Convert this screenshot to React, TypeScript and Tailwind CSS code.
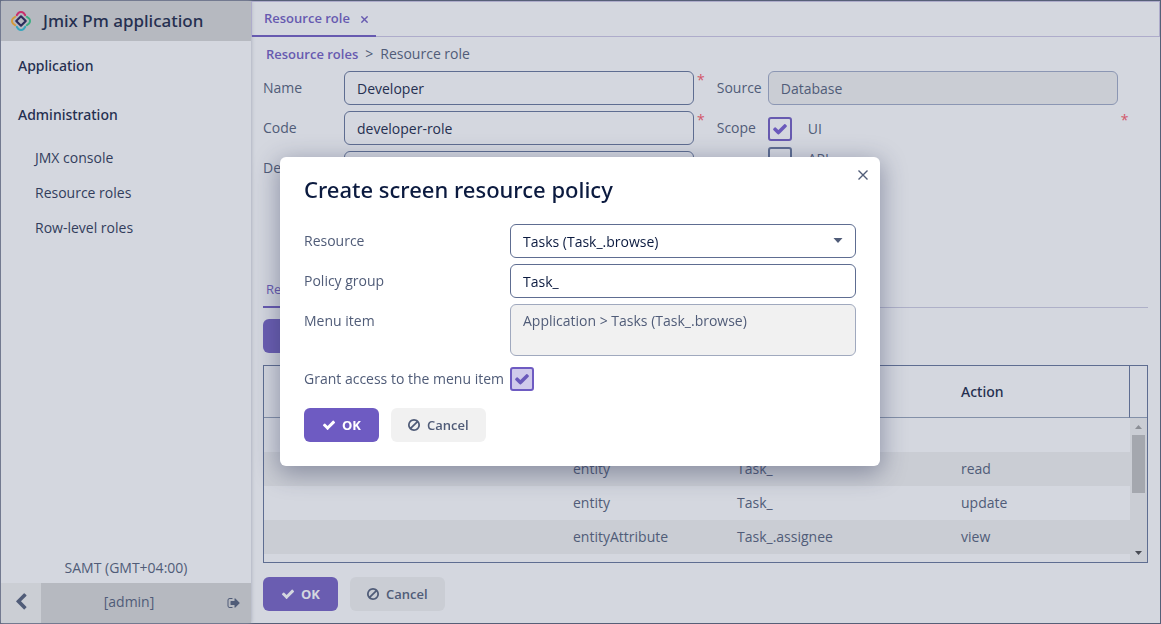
import { useState } from "react";

const menuItems = ["JMX console", "Resource roles", "Row-level roles"];

const policies = [
  { type: "", resource: "", action: "" },
  { type: "entity", resource: "Task_", action: "read" },
  { type: "entity", resource: "Task_", action: "update" },
  { type: "entityAttribute", resource: "Task_.assignee", action: "view" },
  { type: "", resource: "", action: "" },
];

export default function App() {
  return (
    <div className="flex min-h-screen border border-[#565f78] bg-[#d4d7df] font-['Open_Sans',sans-serif] text-sm text-[#505c78]">
      <Sidebar />
      <main className="flex min-w-0 flex-1 flex-col">
        <div className="flex h-9 border border-[#aeaccb]">
          <div className="flex h-[35px] shrink-0 items-center gap-1.5 border-b-2 border-[#675ab0] pr-1 pl-3 text-[13px] font-semibold text-[#675ab0]">
            <a href="#role">Resource role</a>
            <button aria-label="Close tab" className="flex size-4 items-center justify-center pt-0.5 pl-0.5">
              <CloseIcon className="size-[7px]" strokeWidth={2} />
            </button>
          </div>
        </div>
        <div className="flex flex-col px-3">
          <nav className="flex h-[34px] items-center gap-[7px] px-[3px]">
            <a href="#roles" className="text-[13px] font-semibold text-[#675ab0]">
              Resource roles
            </a>
            <span>&gt;</span>
            <span>Resource role</span>
          </nav>
          <RoleForm />
          <div className="flex h-8 border-b border-[#aeb0c8]">
            <a href="#policies" className="h-8 border-b-2 border-[#675ab0] px-[3px] pt-1 text-[13px] text-[#675ab0]">
              Resource policies
            </a>
          </div>
          <div className="flex pt-[11px] pb-3">
            <button
              aria-label="Create policy"
              className="flex h-[34px] items-center rounded-md bg-[#6a5db1] px-[18px] text-[#d4d7df]"
            >
              <CheckIcon className="size-3.5" />
            </button>
          </div>
          <PolicyTable />
          <div className="mt-3.5 flex gap-3">
            <OkButton dimmed />
            <CancelButton dimmed />
          </div>
        </div>
      </main>
      <PolicyDialog />
    </div>
  );
}

function Sidebar() {
  return (
    <aside className="flex w-[250px] shrink-0 flex-col shadow-[0_0_4px_#9ea3b3]">
      <header className="flex h-10 items-center gap-[11px] bg-[#b6b9c0] px-[9px] font-['Noto_Sans',sans-serif] text-[17px] font-medium text-[#252f50]">
        <Logo />
        Jmix Pm application
      </header>
      <nav className="flex flex-1 flex-col text-[#252f50]">
        <a
          href="#application"
          className="flex h-[49px] items-center px-[17px] font-['Noto_Sans',sans-serif] font-medium"
        >
          Application
        </a>
        <a
          href="#administration"
          className="flex h-[50px] items-center px-[17px] font-['Noto_Sans',sans-serif] font-medium"
        >
          Administration
        </a>
        {menuItems.map((item) => (
          <a key={item} href="#item" className="flex h-[35px] items-center px-[34px] text-[#323d5c]">
            {item}
          </a>
        ))}
      </nav>
      <p className="pb-[5px] text-center">SAMT (GMT+04:00)</p>
      <footer className="flex h-10">
        <button aria-label="Collapse menu" className="flex w-10 items-center justify-center bg-[#cbced4] pb-0.5">
          <ChevronLeftIcon />
        </button>
        <div className="flex flex-1 items-center bg-[#b6b9c0] pr-2.5">
          <span className="flex-1 pr-2.5 pb-0.5 text-center">[admin]</span>
          <button aria-label="Log out">
            <SignOutIcon />
          </button>
        </div>
      </footer>
    </aside>
  );
}

function RoleForm() {
  return (
    <form className="flex h-[205px] gap-3">
      <div className="flex flex-col gap-1.5">
        <div className="flex">
          <label htmlFor="name" className="w-[81px] pt-[7px]">Name</label>
          <input
            id="name"
            defaultValue="Developer"
            className="h-[34px] w-[350px] rounded-md border border-[#5e6d91] px-3 text-[#252f50]"
          />
          <Required />
        </div>
        <div className="flex">
          <label htmlFor="code" className="w-[81px] pt-[7px]">Code</label>
          <input
            id="code"
            defaultValue="developer-role"
            className="h-[34px] w-[350px] rounded-md border border-[#5e6d91] px-3 text-[#252f50]"
          />
          <Required />
        </div>
        <div className="flex">
          <label htmlFor="description" className="w-[81px] pt-[7px]">Description</label>
          <textarea id="description" className="h-28 w-[350px] resize-none rounded-md border border-[#5e6d91] px-3" />
        </div>
      </div>
      <div className="flex flex-col gap-1.5">
        <div className="flex">
          <label htmlFor="source" className="w-[51px] pt-[7px]">Source</label>
          <input
            id="source"
            readOnly
            value="Database"
            className="h-[34px] w-[350px] rounded-md border border-[#8b96b3] bg-[#cacdd4] px-3"
          />
        </div>
        <fieldset className="flex">
          <legend className="float-left w-[51px] pt-[7px]">Scope</legend>
          <div className="flex w-[350px] flex-col gap-1.5 pt-1.5">
            <label className="flex items-center gap-4">
              <Checkbox defaultChecked dimmed />
              UI
            </label>
            <label className="flex items-center gap-4">
              <Checkbox dimmed />
              API
            </label>
          </div>
          <Required />
        </fieldset>
      </div>
    </form>
  );
}

function PolicyTable() {
  return (
    <div className="flex h-[198px] overflow-hidden border border-[#5e6d91]">
      <table className="w-full flex-1 table-fixed border-separate border-spacing-0 self-start text-left">
        <thead className="font-['Noto_Sans',sans-serif]">
          <tr className="h-[52px] text-[#252f50]">
            <th className="w-[297px] border-b border-b-[#8390a8]" />
            <th className="w-[164px] border-b border-b-[#8390a8] px-3 font-medium">Type</th>
            <th className="w-[224px] border-b border-b-[#8390a8] px-3 font-medium">Resource</th>
            <th className="border-r border-b border-r-[#5e6d91] border-b-[#8390a8] px-3 font-medium">Action</th>
          </tr>
        </thead>
        <tbody>
          {policies.map((policy, i) => (
            <tr key={i} className="h-[34px] even:bg-[#cacdd4]">
              <td />
              <td className="px-3">{policy.type}</td>
              <td className="px-3">{policy.resource}</td>
              <td className="px-3">{policy.action}</td>
            </tr>
          ))}
        </tbody>
      </table>
      <div className="flex w-[17px] shrink-0 flex-col">
        <div className="h-[52px] border-b border-[#8390a8]" />
        <div className="flex flex-1 flex-col items-center bg-[#cacdd4] pt-[7px] pb-[7px]">
          <svg viewBox="0 0 7 4" className="h-1 w-[7px] fill-[#8b8e95]">
            <path d="M0 4 3.5 0 7 4z" />
          </svg>
          <div className="mt-1.5 h-[58px] w-[13px] bg-[#a4a7ae]" />
          <svg viewBox="0 0 7 4" className="mt-auto h-1 w-[7px] fill-[#484b54]">
            <path d="M0 0 3.5 4 7 0z" />
          </svg>
        </div>
      </div>
    </div>
  );
}

function PolicyDialog() {
  const [group, setGroup] = useState("Task_");

  return (
    <div className="fixed inset-0 flex items-center justify-center pr-px pb-px">
      <div
        role="dialog"
        aria-labelledby="dialog-title"
        className="relative w-[600px] rounded-md bg-white px-6 pb-6 shadow-[0_6px_24px_2px_rgba(40,48,85,0.4)]"
      >
        <button aria-label="Close" className="absolute top-3 right-[11px] p-px text-[#505c78]">
          <CloseIcon className="size-2.5" strokeWidth={1.4} />
        </button>
        <h2
          id="dialog-title"
          className="h-[67px] pt-4 font-['Noto_Sans',sans-serif] text-[22px] leading-8 font-medium text-[#0b1a3f]"
        >
          Create screen resource policy
        </h2>
        <form className="flex flex-col gap-1.5">
          <div className="flex">
            <label htmlFor="resource" className="w-[206px] pt-[7px]">Resource</label>
            <div className="relative flex-1">
              <select
                id="resource"
                className="h-[34px] w-full appearance-none rounded-md border border-[#5e6d91] bg-white px-3 pt-0.5 text-[#0b1a3f]"
              >
                <option>Tasks (Task_.browse)</option>
              </select>
              <svg viewBox="0 0 10 5" className="pointer-events-none absolute top-3.5 right-[13px] h-[5px] w-2.5 fill-[#505c78]">
                <path d="M.5 0h9L5 5z" />
              </svg>
            </div>
          </div>
          <div className="flex">
            <label htmlFor="group" className="w-[206px] pt-[7px]">Policy group</label>
            <input
              id="group"
              value={group}
              onChange={(e) => setGroup(e.target.value)}
              className="h-[34px] min-w-0 flex-1 rounded-md border border-[#5e6d91] px-3 text-[#0b1a3f]"
            />
          </div>
          <div className="flex">
            <label htmlFor="menu-item" className="w-[206px] pt-[7px]">Menu item</label>
            <textarea
              id="menu-item"
              readOnly
              value="Application > Tasks (Task_.browse)"
              className="h-[52px] min-w-0 flex-1 resize-none rounded-md border border-[#a0a9be] bg-[#f1f1f1] px-3 py-1.5"
            />
          </div>
          <div className="flex h-[34px] items-center">
            <label htmlFor="grant" className="w-[206px]">Grant access to the menu item</label>
            <Checkbox id="grant" defaultChecked />
          </div>
        </form>
        <div className="mt-3 flex gap-3">
          <OkButton />
          <CancelButton />
        </div>
      </div>
    </div>
  );
}

function Required() {
  return <span className="pl-[3px] leading-[18px] text-[#d2566a]">*</span>;
}

function Checkbox({ id, defaultChecked, dimmed }: { id?: string; defaultChecked?: boolean; dimmed?: boolean }) {
  return (
    <span className="grid size-6">
      <input
        id={id}
        type="checkbox"
        defaultChecked={defaultChecked}
        className={
          dimmed
            ? "peer col-start-1 row-start-1 size-6 appearance-none rounded-[3px] border-2 border-[#5e6d91] checked:border-[#675ab0]"
            : "peer col-start-1 row-start-1 size-6 appearance-none rounded-[3px] border-2 border-[#6e5bc2] bg-[#d0caeb]"
        }
      />
      <CheckIcon className="pointer-events-none invisible col-start-1 row-start-1 size-4 place-self-center text-[#6a59bb] peer-checked:visible" />
    </span>
  );
}

function OkButton({ dimmed }: { dimmed?: boolean }) {
  return (
    <button
      className={
        dimmed
          ? "flex h-[34px] items-center gap-1.5 rounded-md bg-[#6a5db1] px-[18px] text-[13px] font-bold text-[#d4d7df]"
          : "flex h-[34px] items-center gap-1.5 rounded-md bg-[#6e5bc2] px-[18px] text-[13px] font-bold text-white"
      }
    >
      <CheckIcon className="size-3.5" />
      OK
    </button>
  );
}

function CancelButton({ dimmed }: { dimmed?: boolean }) {
  return (
    <button
      className={
        dimmed
          ? "flex h-[34px] items-center gap-1.5 rounded-md bg-[#cacdd4] pr-[17px] pl-4 text-[13px] font-semibold"
          : "flex h-[34px] items-center gap-1.5 rounded-md bg-[#f1f1f1] pr-[17px] pl-4 text-[13px] font-semibold"
      }
    >
      <BanIcon />
      Cancel
    </button>
  );
}

function Logo() {
  return (
    <svg viewBox="0 0 22 22" className="size-[22px]" fill="none" strokeWidth="2" strokeLinecap="round">
      <path d="M6.8 5.2 8.4 3Q9.4 2 11 2T13.6 3L15.2 5.2" stroke="#c92e6c" />
      <path d="M16.8 6.8 19 8.4Q20 9.4 20 11T19 13.6L16.8 15.2" stroke="#3cae82" />
      <path d="M15.2 16.8 13.6 19Q12.6 20 11 20T8.4 19L6.8 16.8" stroke="#37a6bd" />
      <path d="M5.2 15.2 3 13.6Q2 12.6 2 11T3 8.4L5.2 6.8" stroke="#d59a3c" />
      <path d="M11 6.2 15.8 11 11 15.8 6.2 11z" stroke="#2b2b5c" strokeLinejoin="round" />
    </svg>
  );
}

function CloseIcon({ className, strokeWidth }: { className: string; strokeWidth: number }) {
  return (
    <svg viewBox="0 0 10 10" className={className} fill="none" stroke="currentColor" strokeWidth={strokeWidth}>
      <path d="M.5.5l9 9M9.5.5l-9 9" />
    </svg>
  );
}

function CheckIcon({ className }: { className: string }) {
  return (
    <svg viewBox="0 0 1792 1792" className={className} fill="currentColor">
      <path d="M1671 566q0 40-28 68l-724 724-136 136q-28 28-68 28t-68-28l-136-136-362-362q-28-28-28-68t28-68l136-136q28-28 68-28t68 28l294 295 656-657q28-28 68-28t68 28l136 136q28 28 28 68z" />
    </svg>
  );
}

function BanIcon() {
  return (
    <svg viewBox="0 0 1792 1792" className="size-3.5" fill="currentColor">
      <path d="M1440 893q0-161-87-295l-754 753q137 89 297 89 111 0 211.5-43.5t173.5-116.5 116-174.5 43-212.5zm-999 299l755-754q-135-91-300-91-148 0-273 73t-198 199-73 274q0 162 89 299zm1223-299q0 157-61 300t-163.5 246-245 164-298.5 61-298.5-61-245-164-163.5-246-61-300 61-299.5 163.5-245.5 245-164 298.5-61 298.5 61 245 164 163.5 245.5 61 299.5z" />
    </svg>
  );
}

function ChevronLeftIcon() {
  return (
    <svg viewBox="0 0 1792 1792" className="size-[18px]" fill="currentColor">
      <path d="M1427 301l-531 531 531 531q19 19 19 45t-19 45l-166 166q-19 19-45 19t-45-19l-742-742q-19-19-19-45t19-45l742-742q19-19 45-19t45 19l166 166q19 19 19 45t-19 45z" />
    </svg>
  );
}

function SignOutIcon() {
  return (
    <svg viewBox="0 0 1792 1792" className="size-3.5" fill="currentColor">
      <path d="M704 1440q0 4 1 20t.5 26.5-3 23.5-10 19.5-20.5 6.5h-320q-119 0-203.5-84.5t-84.5-203.5v-704q0-119 84.5-203.5t203.5-84.5h320q13 0 22.5 9.5t9.5 22.5q0 4 1 20t.5 26.5-3 23.5-10 19.5-20.5 6.5h-320q-66 0-113 47t-47 113v704q0 66 47 113t113 47h312l11.5 1 11.5 3 8 5.5 7 9 2 13.5zm928-544q0 26-19 45l-544 544q-19 19-45 19t-45-19-19-45v-288h-448q-26 0-45-19t-19-45v-384q0-26 19-45t45-19h448v-288q0-26 19-45t45-19 45 19l544 544q19 19 19 45z" />
    </svg>
  );
}
